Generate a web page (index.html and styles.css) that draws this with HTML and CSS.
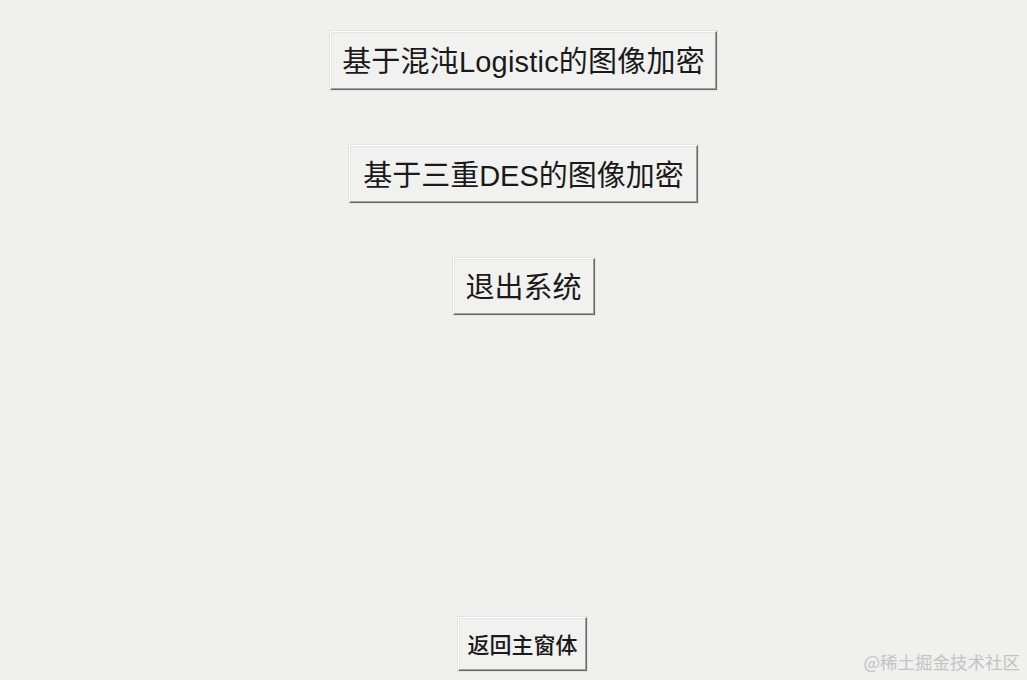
FILE: index.html
```html
<!DOCTYPE html>
<html lang="zh-CN">
<head>
<meta charset="utf-8">
<title>图像加密系统</title>
<link rel="stylesheet" href="styles.css">
</head>
<body>
<main class="form">
  <div class="menu">
    <button class="win-btn btn-logistic" type="button">基于混沌Logistic的图像加密</button>
    <button class="win-btn btn-des" type="button">基于三重DES的图像加密</button>
    <button class="win-btn btn-exit" type="button">退出系统</button>
  </div>
  <div class="footer">
    <button class="win-btn btn-back" type="button">返回主窗体</button>
  </div>
</main>
<div class="watermark">@稀土掘金技术社区</div>
</body>
</html>
```

FILE: styles.css
```css
html, body {
  margin: 0;
  padding: 0;
  height: 100%;
  background: #f0f0ef;
  overflow: hidden;
}

body {
  font-family: "Liberation Sans", "Noto Sans CJK SC", sans-serif;
  color: #111;
}

.form {
  height: 680px;
  box-sizing: border-box;
  padding: 31px 0 0 20px;
  display: flex;
  flex-direction: column;
  align-items: center;
}

.menu {
  display: flex;
  flex-direction: column;
  align-items: center;
  gap: 55px;
}

.footer {
  margin-top: auto;
  margin-bottom: 9px;
  display: flex;
  justify-content: center;
}

/* classic raised 3D push button */
.win-btn {
  box-sizing: border-box;
  display: flex;
  align-items: center;
  justify-content: center;
  padding: 0 0 3px;
  margin: 0;
  font-family: "Liberation Sans", "Noto Sans CJK SC", sans-serif;
  color: #1a1a1a;
  background: #f1f1f0;
  border: 1px solid;
  border-color: #ffffff #6a6a6a #6a6a6a #ffffff;
  box-shadow: inset -1px -1px 0 #a0a0a0, inset 1px 1px 0 #e6e6e6, 0 0 0 1px #e2e2e2;
  white-space: nowrap;
}

.btn-logistic {
  width: 387px;
  height: 59px;
  font-size: 29px;
  letter-spacing: 0.2px;
}

.btn-des {
  width: 349px;
  height: 58px;
  font-size: 29px;
}

.btn-exit {
  width: 142px;
  height: 57px;
  font-size: 29px;
}

.btn-back {
  width: 129px;
  height: 54px;
  font-size: 22px;
  color: #1a1a1a;
  font-weight: 500;
  margin-left: -2px;
  padding-bottom: 2px;
}

.watermark {
  position: absolute;
  right: 7px;
  bottom: 7px;
  font-family: "Noto Sans CJK SC", sans-serif;
  font-size: 17.5px;
  line-height: 22px;
  color: #c3c3c3;
}
```
